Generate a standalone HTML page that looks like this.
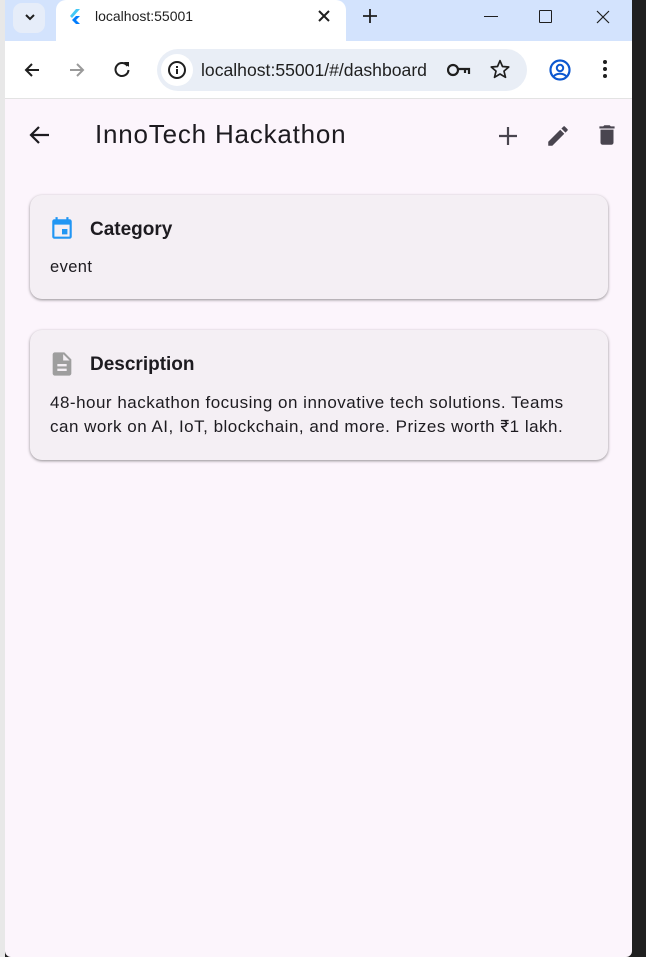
<!DOCTYPE html>
<html><head><meta charset="utf-8"><style>
*{margin:0;padding:0;box-sizing:border-box}
body{width:646px;height:957px;background:#202020;position:relative;overflow:hidden;font-family:"Liberation Sans",Roboto,sans-serif}
.left{position:absolute;left:0;top:0;width:5px;height:957px;background:#e8e8e8}
.win{position:absolute;left:5px;top:0;width:627px;height:957px;background:#fcf5fc;border-radius:0 0 6px 6px;overflow:hidden}
.tabbar{position:absolute;left:0;top:0;width:627px;height:41px;background:#d3e3fd}
.tab{position:absolute;left:51px;top:0;width:290px;height:41px;background:#fff;border-radius:10px 10px 0 0}
.toolbar{position:absolute;left:0;top:41px;width:627px;height:58px;background:#fff;border-bottom:1px solid #e3e3e3}
.omni{position:absolute;left:152px;top:8px;width:370px;height:42px;border-radius:21px;background:#e9eef6}
.t{position:absolute;white-space:nowrap}
.card{position:absolute;left:25px;width:578px;background:#f4eff4;border-radius:12px;box-shadow:0 1px 3px rgba(0,0,0,.3),0 1px 2px rgba(0,0,0,.15)}
</style></head><body>
<div class="left"></div>
<div class="win">
 <div class="tabbar">
  <div style="position:absolute;left:8px;top:3px;width:32px;height:30px;border-radius:9px;background:#e6edf9"></div>
  <svg class="t" style="left:18px;top:10px" width="14" height="14" viewBox="0 0 14 14"><path d="M3 5l4 4 4-4" stroke="#1f1f1f" stroke-width="2" fill="none"/></svg>
  <div class="tab"></div>
  <svg class="t" style="left:63px;top:8px" width="14" height="18" viewBox="0 0 14 18"><path d="M8 1L2 8l2 2 8-9z" fill="#44c8f5"/><path d="M8 8l-4 4 4 4h4l-4-4 4-4z" fill="#027dfd"/></svg>
  <div class="t" style="left:90px;top:8px;font-size:14px;color:#1f1f1f">localhost:55001</div>
  <svg class="t" style="left:313px;top:10px" width="12" height="12"><path d="M1 1l10 10M11 1L1 11" stroke="#1f1f1f" stroke-width="2"/></svg>
  <svg class="t" style="left:358px;top:9px" width="14" height="14"><path d="M7 0v14M0 7h14" stroke="#1f1f1f" stroke-width="1.8"/></svg>
  <div class="t" style="left:479px;top:16px;width:14px;height:1px;background:#1f1f1f"></div>
  <div class="t" style="left:534px;top:10px;width:13px;height:13px;border:1.3px solid #1f1f1f;border-radius:1px"></div>
  <svg class="t" style="left:591px;top:10px" width="14" height="14"><path d="M1 1l12 12M13 1L1 13" stroke="#1f1f1f" stroke-width="1.2"/></svg>
 </div>
 <div class="toolbar">
  <svg class="t" style="left:18px;top:20px" width="18" height="18" viewBox="0 0 18 18"><path d="M16 9H3M9 3L3 9l6 6" stroke="#1f1f1f" stroke-width="2" fill="none"/></svg>
  <svg class="t" style="left:63px;top:20px" width="18" height="18" viewBox="0 0 18 18"><path d="M2 9h13M9 3l6 6-6 6" stroke="#9a9a9a" stroke-width="2" fill="none"/></svg>
  <svg class="t" style="left:108px;top:19px" width="18" height="18" viewBox="0 0 18 18"><path d="M14.5 6A6.5 6.5 0 1 0 15.5 10" stroke="#1f1f1f" stroke-width="2" fill="none"/><path d="M11 2h5v5z" fill="#1f1f1f"/></svg>
  <div class="omni">
   <div style="position:absolute;left:4px;top:5px;width:32px;height:32px;border-radius:16px;background:#fff"></div>
   <svg class="t" style="left:11px;top:12px" width="18" height="18"><circle cx="9" cy="9" r="8" stroke="#1f1f1f" stroke-width="2" fill="none"/><rect x="8" y="8" width="2" height="5" fill="#1f1f1f"/><rect x="8" y="5" width="2" height="2" fill="#1f1f1f"/></svg>
   <div class="t" style="left:44px;top:11px;font-size:17.6px;color:#1f1f1f">localhost:55001/#/dashboard</div>
   <svg class="t" style="left:290px;top:13px" width="24" height="16"><circle cx="6" cy="8" r="5" stroke="#1f1f1f" stroke-width="2.2" fill="none"/><path d="M11 7h11v5M18 7v4" stroke="#1f1f1f" stroke-width="2.2" fill="none"/></svg>
   <svg class="t" style="left:333px;top:10px" width="20" height="20" viewBox="0 0 24 24"><path d="M12 2l3 7 7.5.6-5.7 5 1.8 7.4L12 18l-6.6 4 1.8-7.4-5.7-5L9 9z" stroke="#1f1f1f" stroke-width="2" fill="none" stroke-linejoin="round"/></svg>
  </div>
  <svg class="t" style="left:544px;top:18px" width="22" height="22"><circle cx="11" cy="11" r="9.5" stroke="#0b57d0" stroke-width="2.2" fill="none"/><circle cx="11" cy="9" r="3.2" stroke="#0b57d0" stroke-width="2" fill="none"/><path d="M5 17c3-3 9-3 12 0" stroke="#0b57d0" stroke-width="2" fill="none"/></svg>
  <svg class="t" style="left:598px;top:18px" width="4" height="20"><circle cx="2" cy="3" r="2" fill="#1f1f1f"/><circle cx="2" cy="10" r="2" fill="#1f1f1f"/><circle cx="2" cy="17" r="2" fill="#1f1f1f"/></svg>
 </div>
 <svg class="t" style="left:23px;top:125px" width="22" height="20" viewBox="0 0 22 20"><path d="M21 10H3M11 2l-8 8 8 8" stroke="#1d1b20" stroke-width="2.2" fill="none"/></svg>
 <div class="t" style="left:90px;top:119px;font-size:26px;letter-spacing:0.8px;color:#1d1b20">InnoTech Hackathon</div>
 <svg class="t" style="left:493px;top:126px" width="20" height="20"><path d="M10 1v18M1 10h18" stroke="#49454f" stroke-width="2.2"/></svg>
 <svg class="t" style="left:540px;top:123px" width="26" height="26" viewBox="0 0 24 24"><path d="M3 17.25V21h3.75L17.81 9.94l-3.75-3.75L3 17.25zM20.71 7.04a1 1 0 0 0 0-1.41l-2.34-2.34a1 1 0 0 0-1.41 0l-1.83 1.83 3.75 3.75 1.83-1.83z" fill="#49454f"/></svg>
 <svg class="t" style="left:589px;top:122px" width="26" height="26" viewBox="0 0 24 24"><path d="M6 19c0 1.1.9 2 2 2h8c1.1 0 2-.9 2-2V7H6v12zM19 4h-3.5l-1-1h-5l-1 1H5v2h14V4z" fill="#49454f"/></svg>
 <div class="card" style="top:195px;height:104px">
  <svg class="t" style="left:19px;top:20px" width="26" height="28" viewBox="0 0 24 24"><path d="M17 12h-5v5h5v-5zM16 1v2H8V1H6v2H5c-1.11 0-2 .9-2 2v14a2 2 0 0 0 2 2h14c1.1 0 2-.9 2-2V5c0-1.1-.9-2-2-2h-1V1h-2zm3 18H5V8h14v11z" fill="#2196f3"/></svg>
  <div class="t" style="left:60px;top:24px;font-size:19px;font-weight:bold;color:#1d1b20">Category</div>
  <div class="t" style="left:20px;top:63px;font-size:16.5px;letter-spacing:0.4px;color:#1d1b20">event</div>
 </div>
 <div class="card" style="top:330px;height:130px">
  <svg class="t" style="left:18px;top:20px" width="28" height="28" viewBox="0 0 24 24"><path d="M14 2H6c-1.1 0-2 .9-2 2v16c0 1.1.9 2 2 2h12c1.1 0 2-.9 2-2V8l-6-6zm2 16H8v-2h8v2zm0-4H8v-2h8v2zm-3-5V3.5L18.5 9H13z" fill="#9e9e9e"/></svg>
  <div class="t" style="left:60px;top:24px;font-size:19px;font-weight:bold;color:#1d1b20">Description</div>
  <div class="t" style="left:20px;top:61px;font-size:17px;letter-spacing:0.5px;line-height:24px;color:#1d1b20">48-hour hackathon focusing on innovative tech solutions. Teams<br>can work on AI, IoT, blockchain, and more. Prizes worth ₹1 lakh.</div>
 </div>
</div>
</body></html>
